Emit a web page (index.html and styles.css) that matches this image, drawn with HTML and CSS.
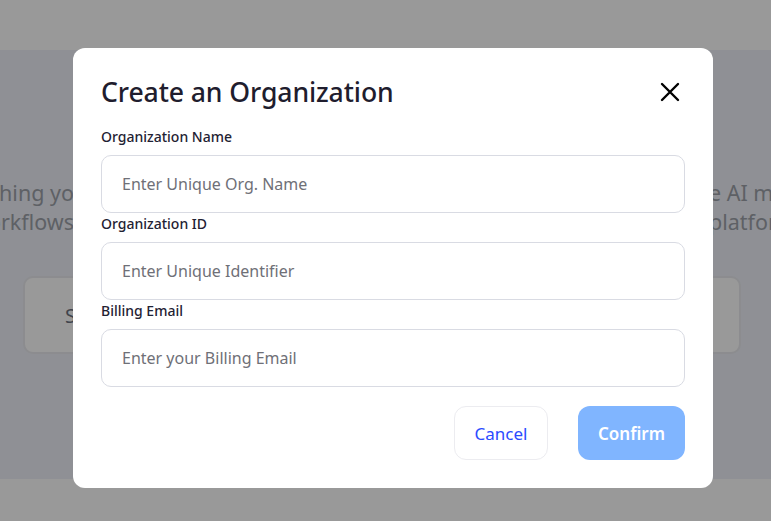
FILE: index.html
```html
<!DOCTYPE html>
<html lang="en">
<head>
<meta charset="utf-8">
<title>Create an Organization</title>
<link rel="stylesheet" href="styles.css">
</head>
<body>
<div class="page">
  <header class="topbar"></header>
  <main class="main">
    <div class="intro">
      <div class="intro-line">
        <span class="edge edge-left"><span>Start by launching yo</span></span>
        <span class="edge edge-right"><span>e AI models</span></span>
      </div>
      <div class="intro-line">
        <span class="edge edge-left"><span>and workflows</span></span>
        <span class="edge edge-right"><span>platforms</span></span>
      </div>
    </div>
    <div class="cards">
      <div class="card"><span>Start</span></div>
      <div class="card"><span>Explore</span></div>
    </div>
  </main>
  <footer class="bottombar"></footer>
</div>

<div class="overlay">
  <div class="modal" role="dialog" aria-labelledby="modal-title">
    <div class="modal-head">
      <h2 id="modal-title" class="modal-title">Create an Organization</h2>
      <button class="close-btn" aria-label="Close">
        <svg width="24" height="24" viewBox="0 0 24 24" fill="none" stroke="#000" stroke-width="2.4" stroke-linecap="round"><path d="M4 4 L20 20 M20 4 L4 20"/></svg>
      </button>
    </div>
    <form class="modal-form">
      <div class="field">
        <label class="field-label" for="org-name">Organization Name</label>
        <input class="field-input" id="org-name" type="text" placeholder="Enter Unique Org. Name">
      </div>
      <div class="field">
        <label class="field-label" for="org-id">Organization ID</label>
        <input class="field-input" id="org-id" type="text" placeholder="Enter Unique Identifier">
      </div>
      <div class="field">
        <label class="field-label" for="org-email">Billing Email</label>
        <input class="field-input" id="org-email" type="email" placeholder="Enter your Billing Email">
      </div>
      <div class="actions">
        <button type="button" class="btn btn-cancel">Cancel</button>
        <button type="button" class="btn btn-confirm">Confirm</button>
      </div>
    </form>
  </div>
</div>
</body>
</html>
```

FILE: styles.css
```css
* { box-sizing: border-box; }

html, body {
  margin: 0;
  padding: 0;
  height: 100%;
}

body {
  font-family: "Noto Sans", "Open Sans", sans-serif;
  background: #ffffff;
  overflow: hidden;
}

.page {
  display: flex;
  flex-direction: column;
  height: 521px;
}

.topbar {
  height: 50px;
  background: #ffffff;
  flex: none;
}

.main {
  flex: 1;
  background: #eef1f9;
  overflow: hidden;
  padding-top: 128px;
}

.intro {
  display: flex;
  flex-direction: column;
}

.intro-line {
  display: flex;
  justify-content: space-between;
  height: 29px;
  font-size: 21.5px;
  line-height: 29px;
  color: #9da1a9;
  white-space: nowrap;
}

.edge {
  display: flex;
  overflow: hidden;
}

.edge-left {
  width: 74px;
  justify-content: flex-end;
}

.edge-right {
  width: 62px;
  justify-content: flex-start;
}

.cards {
  display: grid;
  grid-template-columns: 1fr 1fr;
  gap: 24px;
  margin: 40px 30px 0 23px;
}

.card {
  height: 78px;
  background: #ffffff;
  border: 2px solid #e9eaee;
  border-radius: 10px;
  display: flex;
  align-items: center;
  padding-left: 40px;
  font-size: 20px;
  color: #6b7280;
}

.bottombar {
  height: 42px;
  background: #ffffff;
  flex: none;
}

.overlay {
  position: fixed;
  inset: 0;
  background: rgba(0, 0, 0, 0.4);
  display: flex;
  align-items: flex-start;
  padding: 48px 0 0 73px;
}

.modal {
  width: 640px;
  height: 440px;
  background: #ffffff;
  border-radius: 12px;
  padding: 26px 28px 28px 28px;
  display: flex;
  flex-direction: column;
}

.modal-head {
  display: flex;
  justify-content: space-between;
  align-items: center;
  height: 36px;
}

.modal-title {
  margin: 0;
  font-size: 26.6px;
  line-height: 36px;
  font-weight: 500;
  color: #1f1d2e;
  letter-spacing: -0.1px;
}

.close-btn {
  border: none;
  background: none;
  padding: 0;
  margin-right: 3px;
  width: 24px;
  height: 24px;
  cursor: pointer;
  display: flex;
}

.modal-form {
  display: flex;
  flex-direction: column;
  margin: 17px 0 0 0;
  gap: 1px;
}

.field {
  display: flex;
  flex-direction: column;
  gap: 8px;
}

.field-label {
  font-size: 14px;
  line-height: 20px;
  font-weight: 500;
  color: #1f2233;
}

.field-input {
  height: 58px;
  width: 100%;
  border: 1px solid #d9dbe3;
  border-radius: 10px;
  padding: 0 20px;
  font-family: inherit;
  font-size: 16px;
  color: #1f2233;
  background: #ffffff;
  outline: none;
}

.field-input::placeholder {
  color: #6f7077;
  opacity: 1;
}

.actions {
  display: flex;
  justify-content: flex-end;
  gap: 30px;
  margin-top: 18px;
}

.btn {
  height: 54px;
  border-radius: 12px;
  font-family: inherit;
  font-size: 17px;
  cursor: pointer;
}

.btn-cancel {
  width: 94px;
  background: #ffffff;
  border: 1px solid #ececf0;
  color: #2b4bff;
  font-weight: 400;
}

.btn-confirm {
  width: 107px;
  background: #80b5ff;
  border: none;
  color: #ffffff;
  font-weight: 600;
}
```
